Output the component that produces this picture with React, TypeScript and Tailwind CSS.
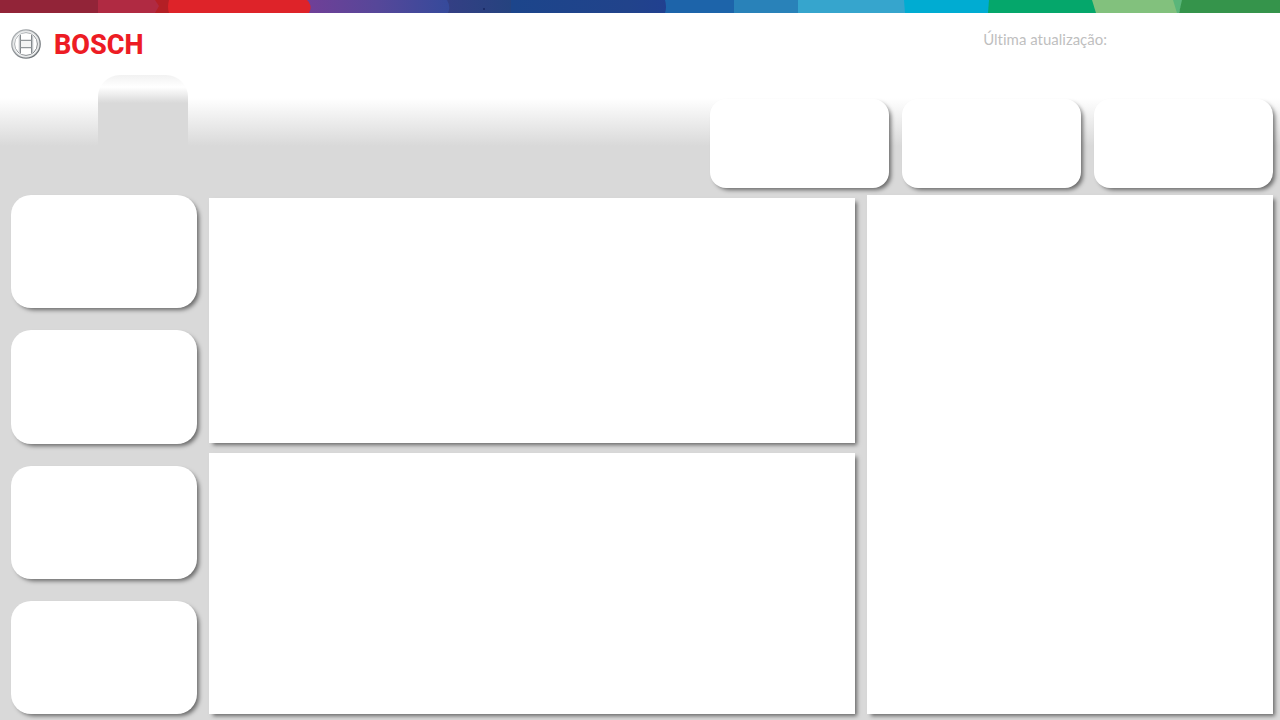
import type { ReactNode } from 'react';

const shadow = 'shadow-[3px_3px_4px_-1px_rgba(0,0,0,0.52)]';

function Card({ className, label, children }: { className: string; label: string; children?: ReactNode }) {
  return (
    <section aria-label={label} className={`bg-white ${shadow} ${className}`}>
      {children}
    </section>
  );
}

function ColorStrip() {
  return (
    <svg aria-hidden="true" className="block h-[13px] w-full shrink-0" viewBox="0 0 1280 13" preserveAspectRatio="none">
      <defs>
        <linearGradient id="violet" x1="0" x2="1" y1="0" y2="0">
          <stop offset="0" stopColor="#713f97" />
          <stop offset="0.5" stopColor="#564799" />
          <stop offset="1" stopColor="#354a9b" />
        </linearGradient>
        <linearGradient id="navy" x1="0" x2="1" y1="0" y2="0">
          <stop offset="0" stopColor="#343f84" />
          <stop offset="1" stopColor="#25437f" />
        </linearGradient>
        <linearGradient id="blue" x1="0" x2="1" y1="0" y2="0">
          <stop offset="0" stopColor="#1c458b" />
          <stop offset="0.75" stopColor="#21438b" />
          <stop offset="1" stopColor="#214090" />
        </linearGradient>
      </defs>
      <path fill="#922438" d="M0 0h100v13H0z" />
      <path fill="#b41f25" d="M150 0h20v13h-20z" />
      <path fill="#b02a42" d="M98 0h57l4 6-4 7H98z" />
      <path fill="url(#violet)" d="M305 0h145v13H305z" />
      <path fill="#de2329" d="M169 0h138q6 6 2 13H169q-2-6 0-13z" />
      <path fill="url(#navy)" d="M447 0h65v13h-64q3-6-1-13z" />
      <path fill="url(#blue)" d="M511 0h156v13H511z" />
      <path fill="#1d64aa" d="M665 0h70v13h-70q2-6 0-13z" />
      <path fill="#2982b9" d="M734 0h65v13h-65z" />
      <path fill="#36a5cd" d="M798 0h108v13H798z" />
      <path fill="#00acd2" d="M904 0h86v13h-85z" />
      <path fill="#05a76b" d="M989 0h110v13H988z" />
      <path fill="#82c17d" d="M1092 0h86v13h-82z" />
      <path fill="#5ab67a" d="M1173 0h10l-4 13h-2z" />
      <path fill="#35944b" d="M1182 0h98v13h-101z" />
      <circle cx="484" cy="9" r="1" fill="#17265f" />
    </svg>
  );
}

function Emblem() {
  return (
    <svg aria-hidden="true" className="size-[30px]" viewBox="0 0 30 30" fill="none">
      <defs>
        <linearGradient id="metal" x1="0" x2="1" y1="0" y2="1">
          <stop offset="0" stopColor="#b4b8bb" />
          <stop offset="0.5" stopColor="#8b9094" />
          <stop offset="1" stopColor="#64696d" />
        </linearGradient>
      </defs>
      <circle cx="15" cy="15" r="13" stroke="#e3e5e6" strokeWidth="1.6" />
      <circle cx="15" cy="15" r="14.2" stroke="url(#metal)" strokeWidth="1.3" />
      <circle cx="15" cy="15" r="11.4" stroke="url(#metal)" strokeWidth="0.9" />
      <path fill="#c3c6c9" d="M9.3 6v18l-1.6-1.6V7.6zM20.7 6v18l1.6-1.6V7.6z" />
      <path stroke="#858a8e" strokeWidth="1" d="M9.5 6v18M20.5 6v18" />
      <path fill="#f3f4f4" d="M10 12h10v6H10z" />
      <path stroke="#92979a" strokeWidth="1.2" d="M9.5 11.4h11M9.5 18.6h11" />
    </svg>
  );
}

export default function App() {
  return (
    <div className="flex min-h-screen flex-col bg-[#d9d9d9] font-['Lato','Liberation_Sans',sans-serif]">
      <ColorStrip />
      <header className="flex h-[62px] items-center justify-between bg-white pr-[173px] pl-[11px]">
        <div className="flex items-center gap-[13px]">
          <Emblem />
          <span className="pt-px font-['Roboto',sans-serif] text-[27px] leading-8 font-extrabold text-[#ed1c24]">BOSCH</span>
        </div>
        <p className="mb-[10px] text-[15px] leading-5 text-[#bfbfbf] [font-variant-ligatures:none]">Última atualização:</p>
      </header>
      <div className="flex h-[120px] justify-between bg-[linear-gradient(to_bottom,#fff_23px,#d9d9d9_71px)] pr-[7px] pl-[98px]">
        <div className="w-[90px] rounded-t-[22px] bg-[linear-gradient(to_bottom,#f2f2f2_0px,#fff_12px,#d9d9d9_28px)]" />
        <div className="flex gap-[13px] pt-6 pb-[7px]">
          <Card label="Indicador 1" className="w-[179px] rounded-2xl" />
          <Card label="Indicador 2" className="w-[179px] rounded-2xl" />
          <Card label="Indicador 3" className="w-[179px] rounded-2xl" />
        </div>
      </div>
      <main className="grid flex-1 grid-cols-[186fr_646fr_406fr] gap-3 pr-[7px] pb-[6px] pl-[11px]">
        <div className="grid grid-rows-4 gap-[22px]">
          <Card label="Resumo 1" className="rounded-[20px]" />
          <Card label="Resumo 2" className="rounded-[20px]" />
          <Card label="Resumo 3" className="rounded-[20px]" />
          <Card label="Resumo 4" className="rounded-[20px]" />
        </div>
        <div className="grid grid-rows-[245fr_261fr] gap-[10px] pt-[3px]">
          <Card label="Painel superior" className="" />
          <Card label="Painel inferior" className="" />
        </div>
        <Card label="Painel lateral" className="" />
      </main>
    </div>
  );
}
